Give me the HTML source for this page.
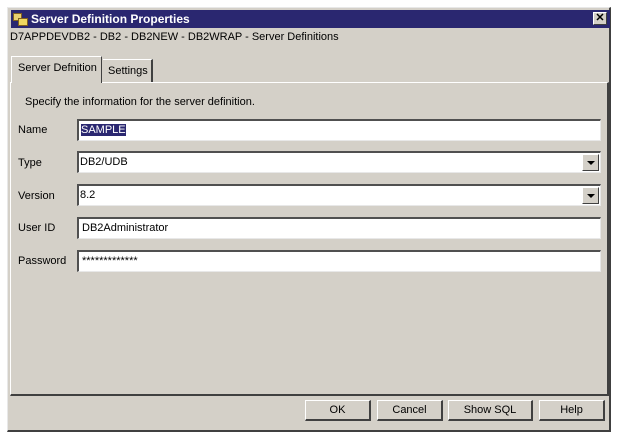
<!DOCTYPE html><html><head><style>
body{margin:0;width:620px;height:438px;background:#fff;font-family:"Liberation Sans",Arial,sans-serif;font-size:11px;position:relative;overflow:hidden}
.a{position:absolute}
.win{left:7px;top:7px;width:604px;height:425px;background:#d4d0c8;border-top:1px solid #e8e8e8;border-left:1px solid #e8e8e8;border-right:2px solid #404040;border-bottom:2px solid #404040;box-sizing:border-box}
.tb{left:11px;top:10px;width:599px;height:18px;background:#2a2770;color:#fff;font-weight:bold;font-size:12px;line-height:18px}
.fld{left:77px;width:524px;height:22px;background:#fff;border-top:2px solid #505050;border-left:2px solid #505050;border-right:1px solid #e8e8e8;border-bottom:1px solid #e8e8e8;box-sizing:border-box;line-height:18px;padding-left:3px;font-size:11px}
.lbl{left:18px;font-size:11px}
.dd{position:absolute;right:1px;top:1px;width:17px;height:17px;background:#d4d0c8;border-top:1px solid #fff;border-left:1px solid #fff;border-right:1px solid #404040;border-bottom:1px solid #404040;box-sizing:border-box}
.dd:after{content:"";position:absolute;left:4px;top:6px;border-left:4px solid transparent;border-right:4px solid transparent;border-top:4px solid #000}
.btn{top:400px;height:21px;background:#d4d0c8;border-top:1px solid #fff;border-left:1px solid #fff;border-right:2px solid #404040;border-bottom:2px solid #404040;box-sizing:border-box;text-align:center;line-height:18px;font-size:11px}
</style></head><body>
<div class="a win"></div>
<div class="a tb"><span style="position:absolute;left:2px;top:3px;width:7px;height:6px;background:#e8d070;border:1px solid #806020"></span><span style="position:absolute;left:7px;top:8px;width:8px;height:6px;background:#f0d860;border:1px solid #806020"></span><span style="position:absolute;left:20px">Server Definition Properties</span>
<span style="position:absolute;right:3px;top:2px;width:14px;height:13px;background:#d4d0c8;border:1px solid;border-color:#fff #404040 #404040 #fff;box-sizing:border-box;color:#000;font-size:11px;line-height:11px;text-align:center">✕</span></div>
<div class="a" style="left:10px;top:31px;font-size:11px">D7APPDEVDB2 - DB2 - DB2NEW - DB2WRAP - Server Definitions</div>
<div class="a" style="left:10px;top:82px;width:599px;height:314px;border-top:1px solid #fff;border-left:1px solid #fff;border-right:2px solid #404040;border-bottom:2px solid #404040;box-sizing:border-box"></div>
<div class="a" style="left:11px;top:56px;width:91px;height:27px;background:#d4d0c8;border-top:1px solid #fff;border-left:1px solid #fff;border-right:1px solid #404040;box-sizing:border-box;line-height:22px;padding-left:6px">Server Defnition</div>
<div class="a" style="left:103px;top:59px;width:50px;height:23px;border-top:1px solid #fff;border-right:2px solid #404040;box-sizing:border-box;line-height:22px;padding-left:5px">Settings</div>
<div class="a" style="left:25px;top:96px">Specify the information for the server definition.</div>
<div class="a lbl" style="top:124px">Name</div>
<div class="a lbl" style="top:157px">Type</div>
<div class="a lbl" style="top:190px">Version</div>
<div class="a lbl" style="top:222px">User ID</div>
<div class="a lbl" style="top:255px">Password</div>
<div class="a fld" style="top:119px"><span style="background:#2a2770;color:#fff;margin-left:-1px">SAMPLE</span></div>
<div class="a fld" style="top:151px;padding-left:1px">DB2/UDB<div class="dd"></div></div>
<div class="a fld" style="top:184px;padding-left:1px">8.2<div class="dd"></div></div>
<div class="a fld" style="top:217px">DB2Administrator</div>
<div class="a fld" style="top:250px">*************</div>
<div class="a btn" style="left:305px;width:66px">OK</div>
<div class="a btn" style="left:377px;width:66px">Cancel</div>
<div class="a btn" style="left:448px;width:85px">Show SQL</div>
<div class="a btn" style="left:539px;width:66px">Help</div>
</body></html>
